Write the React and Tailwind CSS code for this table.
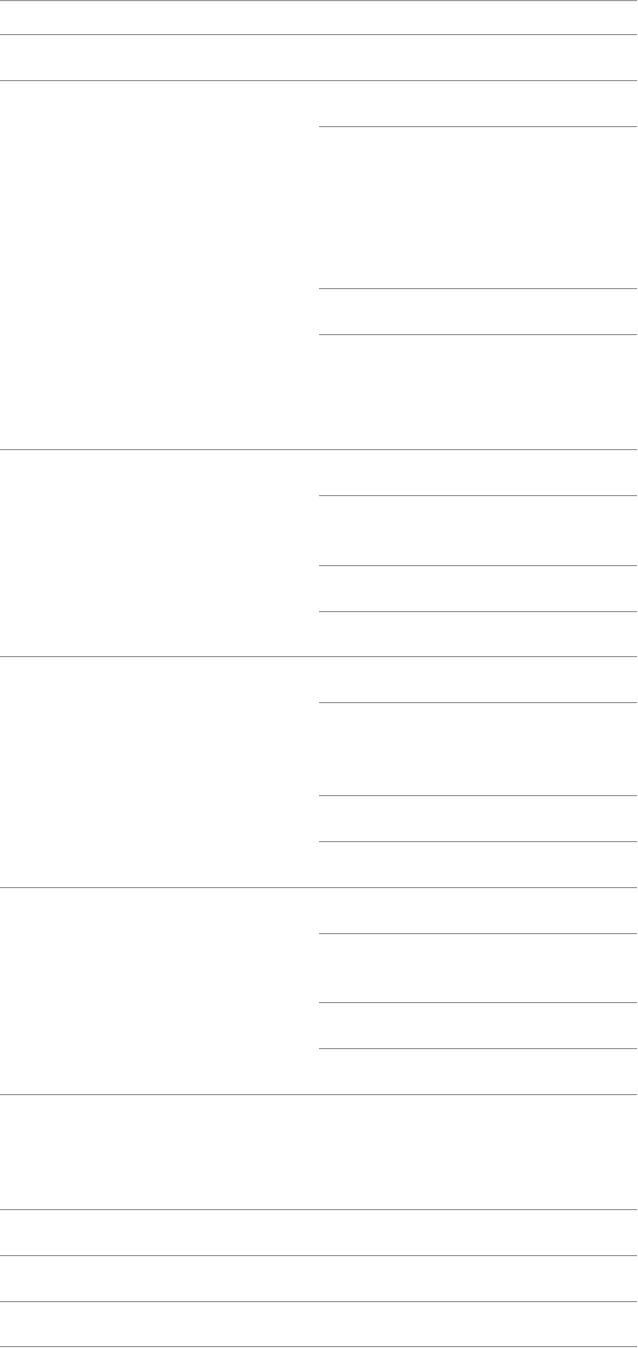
const Rule = () => (
    <div className="h-[2px] w-full border-t border-b border-t-[#9a9a9a] border-b-[#eeeeee]" />
);

// right column rows: heights of the blank space above each rule
const Section = ({ rows, tail }) => (
    <div className="flex">
        <div className="w-[319px] shrink-0" />
        <div className="flex-1 flex flex-col">
            {rows.map((h, i) => (
                <div key={i} className="flex flex-col">
                    <div style={{ height: h }} />
                    <Rule />
                </div>
            ))}
            <div style={{ height: tail }} />
        </div>
    </div>
);

const App = () => {
    return (
        <div className="w-[637px] bg-white font-['Liberation_Sans',sans-serif]">
            <Rule />
            <div className="h-[32px]" />
            <Rule />
            <div className="h-[44px]" />
            <Rule />
            <Section rows={[44, 160, 44]} tail={113} />
            <Rule />
            <Section rows={[44, 68, 44]} tail={43} />
            <Rule />
            <Section rows={[44, 91, 44]} tail={44} />
            <Rule />
            <Section rows={[44, 67, 44]} tail={44} />
            <Rule />
            <div className="h-[113px]" />
            <Rule />
            <div className="h-[44px]" />
            <Rule />
            <div className="h-[44px]" />
            <Rule />
            <div className="h-[43px]" />
            <Rule />
        </div>
    );
};

export default App;
